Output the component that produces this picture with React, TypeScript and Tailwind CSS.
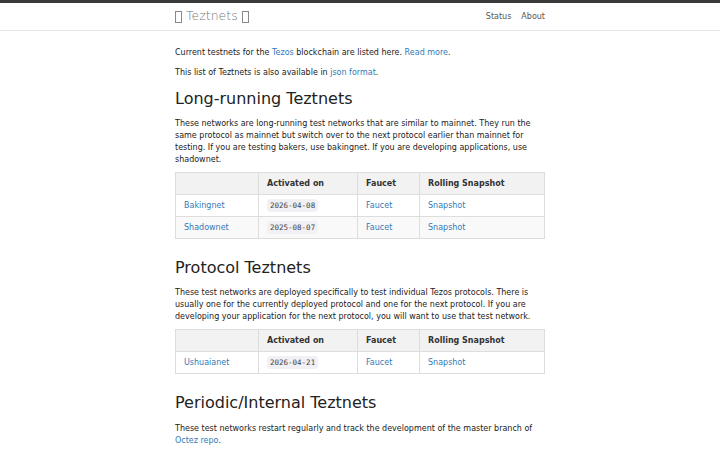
import React from "react"

const font = { fontFamily: '"DejaVu Sans", Verdana, sans-serif' }

type Net = { name: string; date: string }

function Box() {
  return <span className="inline-block w-[7px] h-[12px] border border-[#888] align-[-1px]" />
}

function NetTable({ nets }: { nets: Net[] }) {
  return (
    <table className="w-full border-collapse border border-[#ddd] text-[8px] leading-[12px]">
      <thead>
        <tr className="bg-[#f2f2f2]">
          <th className="w-[83px] border border-[#ddd] h-[22px] px-2 text-left"></th>
          <th className="w-[99px] border border-[#ddd] px-2 text-left font-bold text-[#333]">Activated on</th>
          <th className="w-[62px] border border-[#ddd] px-2 text-left font-bold text-[#333]">Faucet</th>
          <th className="border border-[#ddd] px-2 text-left font-bold text-[#333]">Rolling Snapshot</th>
        </tr>
      </thead>
      <tbody>
        {nets.map((n, i) => (
          <tr key={n.name} className={i % 2 === 1 ? "bg-[#f9f9f9]" : "bg-white"}>
            <td className="border border-[#ddd] h-[22px] px-2 text-[#337ab7]">{n.name}</td>
            <td className="border border-[#ddd] px-2">
              <code
                className="bg-[#f0f0f5] px-[3px] py-[2px] rounded-sm text-[#444] text-[7.5px] font-normal"
                style={{ fontFamily: '"DejaVu Sans Mono", monospace' }}
              >
                {n.date}
              </code>
            </td>
            <td className="border border-[#ddd] px-2 text-[#337ab7]">Faucet</td>
            <td className="border border-[#ddd] px-2 text-[#337ab7]">Snapshot</td>
          </tr>
        ))}
      </tbody>
    </table>
  )
}

export default function App() {
  return (
    <div className="min-h-[450px] bg-white text-[#222]" style={font}>
      <div className="h-[3px] bg-[#3a3a3a]" />
      <nav className="h-[28px] border-b border-[#e7e7e7] bg-white">
        <div className="w-[370px] mx-auto h-full flex items-center justify-between">
          <span className="text-[12.5px] text-[#777] font-light flex items-center gap-[4px]">
            <Box />
            <span>Teztnets</span>
            <Box />
          </span>
          <div className="flex gap-[10px] text-[8px] text-[#555]">
            <span>Status</span>
            <span>About</span>
          </div>
        </div>
      </nav>

      <main className="w-[370px] mx-auto text-[8px] leading-[12px]">
        <p className="mt-[16px]">
          Current testnets for the <span className="text-[#337ab7]">Tezos</span> blockchain are listed here.{" "}
          <span className="text-[#337ab7]">Read more</span>.
        </p>
        <p className="mt-[8px]">
          This list of Teztnets is also available in <span className="text-[#337ab7]">json format</span>.
        </p>

        <h2 className="text-[16px] leading-[20px] mt-[10px] mb-[9px]">Long-running Teztnets</h2>
        <p>
          These networks are long-running test networks that are similar to mainnet. They run the same protocol as
          mainnet but switch over to the next protocol earlier than mainnet for testing. If you are testing bakers,
          use bakingnet. If you are developing applications, use shadownet.
        </p>
        <div className="mt-[6px]">
          <NetTable
            nets={[
              { name: "Bakingnet", date: "2026-04-08" },
              { name: "Shadownet", date: "2025-08-07" },
            ]}
          />
        </div>

        <h2 className="text-[16px] leading-[20px] mt-[19px] mb-[9px]">Protocol Teztnets</h2>
        <p>
          These test networks are deployed specifically to test individual Tezos protocols. There is usually one for
          the currently deployed protocol and one for the next protocol. If you are developing your application for
          the next protocol, you will want to use that test network.
        </p>
        <div className="mt-[6px]">
          <NetTable nets={[{ name: "Ushuaianet", date: "2026-04-21" }]} />
        </div>

        <h2 className="text-[16px] leading-[20px] mt-[19px] mb-[10px]">Periodic/Internal Teztnets</h2>
        <p>
          These test networks restart regularly and track the development of the master branch of{" "}
          <span className="text-[#337ab7]">Octez repo</span>.
        </p>
      </main>
    </div>
  )
}
